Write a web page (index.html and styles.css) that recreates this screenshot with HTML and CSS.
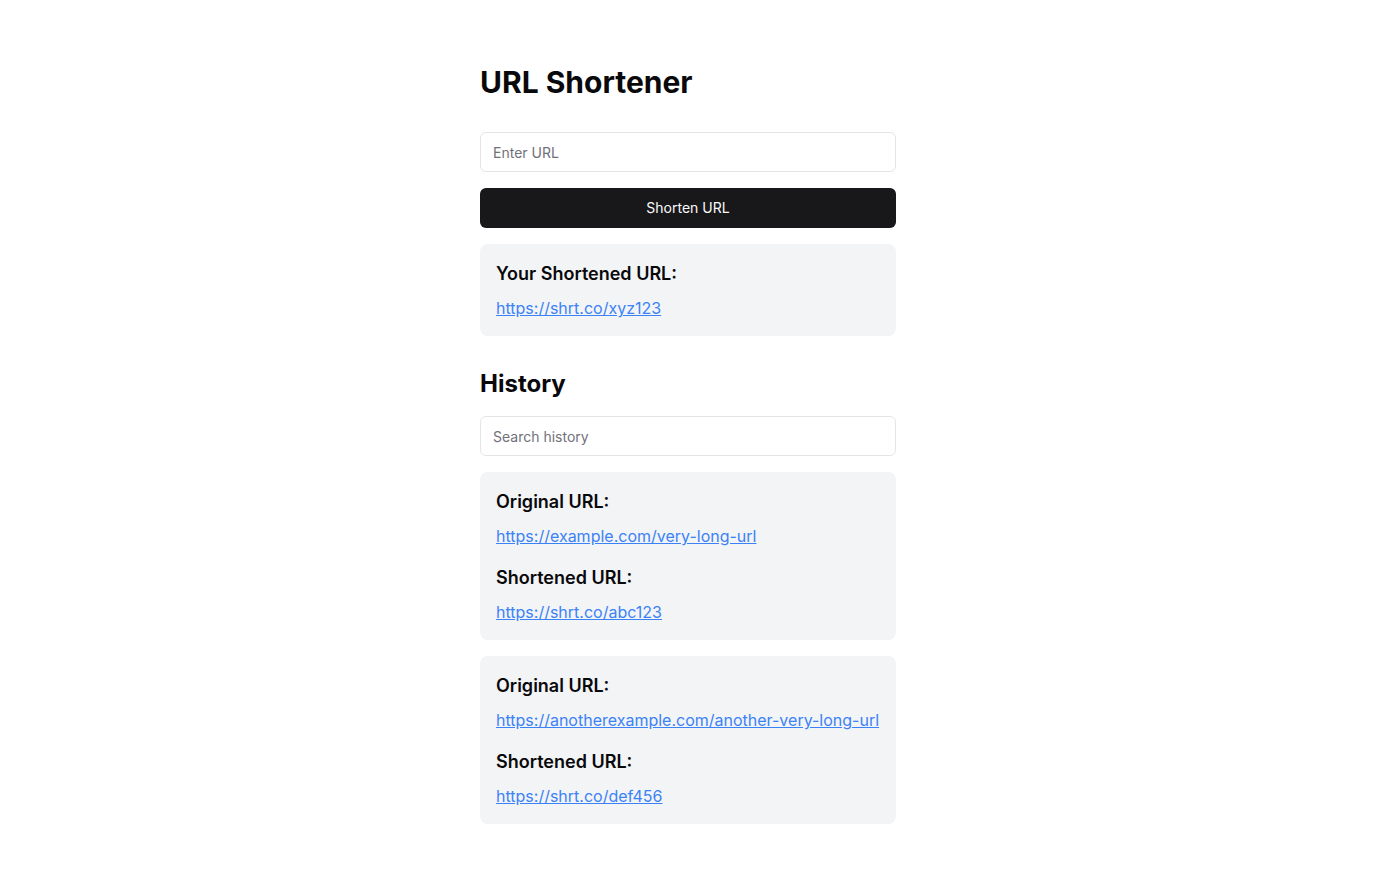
FILE: index.html
```html
<!DOCTYPE html>
<html lang="en">
<head>
<meta charset="utf-8">
<title>URL Shortener</title>
<link rel="stylesheet" href="styles.css">
</head>
<body>
<main class="container">
  <h1 class="title">URL Shortener</h1>
  <div class="form">
    <input class="input" type="text" placeholder="Enter URL">
    <button class="button" type="button">Shorten URL</button>
  </div>
  <section class="card result">
    <h3 class="label">Your Shortened URL:</h3>
    <p class="text"><a class="link" href="#">https://shrt.co/xyz123</a></p>
  </section>
  <h2 class="subtitle">History</h2>
  <input class="input search" type="text" placeholder="Search history">
  <div class="history">
    <section class="card">
      <h3 class="label">Original URL:</h3>
      <p class="text spaced"><a class="link" href="#">https://example.com/very-long-url</a></p>
      <h3 class="label">Shortened URL:</h3>
      <p class="text"><a class="link" href="#">https://shrt.co/abc123</a></p>
    </section>
    <section class="card">
      <h3 class="label">Original URL:</h3>
      <p class="text spaced"><a class="link" href="#">https://anotherexample.com/another-very-long-url</a></p>
      <h3 class="label">Shortened URL:</h3>
      <p class="text"><a class="link" href="#">https://shrt.co/def456</a></p>
    </section>
  </div>
</main>
</body>
</html>
```

FILE: styles.css
```css
* {
  box-sizing: border-box;
}

html, body {
  margin: 0;
  padding: 0;
  background: #ffffff;
  color: #09090b;
  font-family: Inter, "Noto Sans", "Liberation Sans", sans-serif;
}

.container {
  max-width: 448px;
  margin: 0 auto;
  padding: 64px 16px;
}

.title {
  margin: 0 0 32px;
  font-size: 30px;
  line-height: 36px;
  font-weight: 700;
}

.form {
  display: flex;
  flex-direction: column;
  gap: 16px;
  margin-bottom: 16px;
}

.input {
  display: block;
  width: 100%;
  height: 40px;
  padding: 8px 12px;
  border: 1px solid #e4e4e7;
  border-radius: 6px;
  background: #ffffff;
  font-family: inherit;
  font-size: 14px;
  color: #09090b;
  outline: none;
}

.input::placeholder {
  color: #71717a;
}

.button {
  display: block;
  width: 100%;
  height: 40px;
  padding: 0 16px 1px;
  border: none;
  border-radius: 6px;
  background: #18181b;
  color: #fafafa;
  font-family: inherit;
  font-size: 14px;
  font-weight: 400;
}

.card {
  background: #f3f4f6;
  border-radius: 8px;
  padding: 16px;
}

.label {
  margin: 0 0 8px;
  font-size: 18px;
  line-height: 28px;
  font-weight: 600;
}

.text {
  margin: 0;
  font-size: 16px;
  line-height: 24px;
}

.text.spaced {
  margin-bottom: 16px;
}

.link {
  color: #3b82f6;
  text-decoration: underline;
}

.subtitle {
  margin: 32px 0 16px;
  font-size: 24px;
  line-height: 32px;
  font-weight: 700;
}

.search {
  margin-bottom: 16px;
}

.history {
  display: flex;
  flex-direction: column;
  gap: 16px;
}
```
